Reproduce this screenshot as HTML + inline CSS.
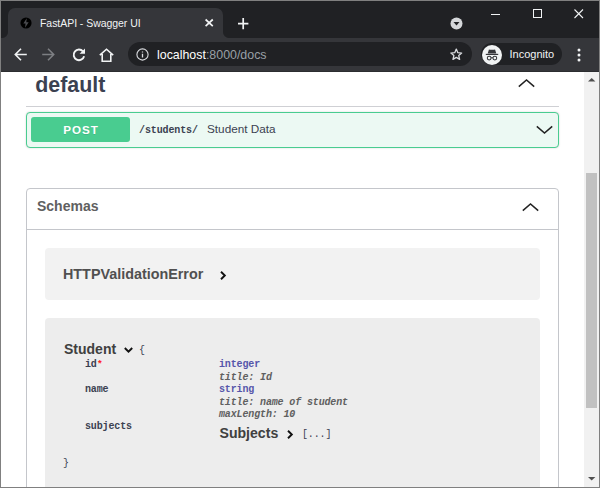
<!DOCTYPE html>
<html>
<head>
<meta charset="utf-8">
<title>FastAPI - Swagger UI</title>
<style>
html,body{margin:0;padding:0;}
body{width:600px;height:488px;overflow:hidden;background:#808080;font-family:"Liberation Sans",sans-serif;position:relative;}
.abs{position:absolute;}
#win{position:absolute;left:1px;top:1px;width:598px;height:486px;overflow:hidden;background:#fff;}
#tabstrip{position:absolute;left:0;top:0;width:598px;height:37px;background:#202124;}
#tab{position:absolute;left:7px;top:7px;width:215px;height:30px;background:#35363a;border-radius:7px 7px 0 0;}
#tab:before,#tab:after{content:"";position:absolute;bottom:0;width:6px;height:6px;}
#tab:before{left:-6px;background:radial-gradient(circle at 0 0,rgba(53,54,58,0) 5.5px,#35363a 6.5px);}
#tab:after{right:-6px;background:radial-gradient(circle at 100% 0,rgba(53,54,58,0) 5.5px,#35363a 6.5px);}
#tabtitle{position:absolute;left:32px;top:7.5px;font-size:10.5px;color:#f1f3f4;white-space:nowrap;line-height:14px;letter-spacing:-0.05px;}
#toolbar{position:absolute;left:0;top:37px;width:598px;height:34px;background:#35363a;box-shadow:inset 0 -1px 0 #2c2d30;}
#omni{position:absolute;left:126.5px;top:4.3px;width:344px;height:24.2px;border-radius:12.1px;background:#202124;}
#url{position:absolute;left:29.5px;top:5.5px;font-size:12.4px;line-height:15px;color:#9aa0a6;white-space:nowrap;}
#url b{font-weight:normal;color:#fff;}
#incog{position:absolute;left:479.5px;top:4.7px;width:81.5px;height:22.6px;border-radius:11.3px;background:#202124;}
#incogtxt{position:absolute;left:29px;top:5px;font-size:11px;line-height:13px;color:#f1f3f4;}
#page{position:absolute;left:0;top:71px;width:583px;height:415px;background:#fff;overflow:hidden;}
#sb{position:absolute;left:583px;top:71px;width:15px;height:415px;background:#f1f1f1;}
#thumb{position:absolute;left:1.8px;top:100.8px;width:11.5px;height:235.5px;background:#c1c1c1;}
h3#tag{position:absolute;margin:0;left:34.2px;top:0.5px;font-size:21.4px;line-height:24px;font-weight:bold;color:#3b4151;}
#tagline{position:absolute;left:25px;top:34px;width:533px;height:1px;background:#cfd0d4;}
#op{position:absolute;left:25px;top:40px;width:531px;height:34px;border:1px solid #49cc90;border-radius:4px;background:#ecf9f3;box-shadow:0 0 2px rgba(0,0,0,.19);}
#post{position:absolute;left:4px;top:4px;width:99px;height:25px;border-radius:3px;background:#49cc90;color:#fff;font-weight:bold;font-size:11.6px;line-height:25px;text-align:center;text-shadow:0 1px 0 rgba(0,0,0,.1);letter-spacing:0.95px;text-indent:1px;}
#path{position:absolute;left:112px;top:11.2px;font-family:"Liberation Mono",monospace;font-weight:bold;letter-spacing:-0.12px;font-size:10px;line-height:14px;color:#3b4151;white-space:nowrap;}
#summ{position:absolute;left:180px;top:9px;font-size:11.75px;line-height:14px;color:#3b4151;white-space:nowrap;}
#models{position:absolute;left:25px;top:116px;width:531px;height:400px;border:1px solid #c4c6cb;border-radius:4px;}
#mhead{position:absolute;left:0;top:0;width:531px;height:40px;border-bottom:1px solid #c4c6cb;}
#mtitle{position:absolute;left:10px;top:9px;font-size:14px;line-height:16px;font-weight:bold;color:#606060;}
.mbox{position:absolute;left:18px;width:495px;border-radius:4px;}
#m1{top:59px;height:52px;background:#f2f2f2;}
#m2{top:129px;height:300px;background:#ededed;}
.mname{position:absolute;font-size:14.25px;line-height:16px;font-weight:bold;color:#404040;white-space:nowrap;}
.mono{font-family:"Liberation Mono",monospace;font-size:10px;letter-spacing:-0.14px;line-height:12px;color:#3b4151;white-space:nowrap;position:absolute;font-weight:bold;}
.prim{color:#55a;}
.it{font-style:italic;color:#606060;}
svg{position:absolute;overflow:visible;}
</style>
</head>
<body>
<div id="win">
  <div id="tabstrip">
    <div id="tab">
      <svg style="left:12.4px;top:8.8px" width="12" height="12" viewBox="0 0 14 14"><circle cx="7" cy="7" r="6.5" fill="#000"/><path d="M7.9 1.6 L3.9 7.7 H6.5 L5.9 12.4 L10.1 6.1 H7.3 Z" fill="#4b4c50"/></svg>
      <div id="tabtitle">FastAPI - Swagger UI</div>
      <svg style="left:197px;top:11.2px" width="8.4" height="7.6" viewBox="0 0 8.4 7.6"><path d="M0.6 0.5 L7.8 7.1 M7.8 0.5 L0.6 7.1" stroke="#f1f3f4" stroke-width="1.7" fill="none"/></svg>
    </div>
    <svg style="left:237px;top:16.9px" width="10.4" height="11.2" viewBox="0 0 10.4 11.2"><path d="M5.2 0 V11.2 M0 5.6 H10.4" stroke="#f1f3f4" stroke-width="1.7" fill="none"/></svg>
    <svg style="left:449px;top:16px" width="13" height="13" viewBox="0 0 13 13"><circle cx="6.5" cy="6.5" r="6" fill="#d5d7da"/><path d="M3.5 5 H9.5 L6.5 8.5 Z" fill="#202124"/></svg>
    <svg style="left:490px;top:8px" width="10" height="10" viewBox="0 0 10 10"><path d="M0 5.5 H9" stroke="#f1f3f4" stroke-width="1" fill="none"/></svg>
    <svg style="left:532px;top:8px" width="10" height="10" viewBox="0 0 10 10"><rect x="0.5" y="0.5" width="8" height="8" stroke="#f1f3f4" stroke-width="1" fill="none"/></svg>
    <svg style="left:573px;top:8px" width="10" height="10" viewBox="0 0 10 10"><path d="M0.5 0.5 L9 9 M9 0.5 L0.5 9" stroke="#f1f3f4" stroke-width="1.1" fill="none"/></svg>
  </div>
  <div id="toolbar">
    <svg style="left:13px;top:10.2px" width="13" height="13" viewBox="0 0 13 13"><path d="M12.8 6.5 H1.6 M7 0.8 L1.3 6.5 L7 12.2" stroke="#f1f3f4" stroke-width="1.6" fill="none"/></svg>
    <svg style="left:41.4px;top:10.2px" width="13" height="13" viewBox="0 0 13 13"><path d="M0.2 6.5 H11.4 M6 0.8 L11.7 6.5 L6 12.2" stroke="#7d7f83" stroke-width="1.6" fill="none"/></svg>
    <svg style="left:70.6px;top:10.2px" width="14" height="13" viewBox="0 0 14 13"><path d="M11 3.4 A5.3 5.3 0 1 0 12.1 8.2" stroke="#f1f3f4" stroke-width="1.9" fill="none"/><path d="M13 0.4 V5.8 H7.6 Z" fill="#f1f3f4"/></svg>
    <svg style="left:98.4px;top:9.8px" width="15" height="14" viewBox="0 0 15 14"><path d="M0.8 7.2 L7.5 1.2 L14.2 7.2 M3.2 6 V13.2 H11.8 V6" stroke="#f1f3f4" stroke-width="1.6" fill="none" stroke-linejoin="miter"/></svg>
    <div id="omni">
      <svg style="left:8.6px;top:5.9px" width="13" height="13" viewBox="0 0 13 13"><circle cx="6.5" cy="6.5" r="5.6" stroke="#dadce0" stroke-width="1.1" fill="none"/><path d="M6.5 5.8 V9.6 M6.5 3.4 V4.6" stroke="#dadce0" stroke-width="1.3" fill="none"/></svg>
      <div id="url"><b>localhost</b>:8000/docs</div>
      <svg style="left:322px;top:6.2px" width="12.6" height="12.6" viewBox="0 0 14 14"><path d="M7 1.2 L8.7 5.2 L13 5.6 L9.7 8.4 L10.7 12.6 L7 10.4 L3.3 12.6 L4.3 8.4 L1 5.6 L5.3 5.2 Z" stroke="#dadce0" stroke-width="1.45" fill="none" stroke-linejoin="round"/></svg>
    </div>
    <div id="incog">
      <svg style="left:1.2px;top:1.9px" width="20" height="20" viewBox="0 0 19 19"><circle cx="9.5" cy="9.5" r="9.5" fill="#f1f3f4"/><path d="M6.6 4.2 L7.6 4.6 H11.4 L12.4 4.2 L13.6 8 H5.4 Z" fill="#35363a"/><rect x="3.6" y="8.4" width="11.8" height="1.1" fill="#35363a"/><circle cx="6.8" cy="12.4" r="1.8" stroke="#35363a" stroke-width="1" fill="none"/><circle cx="12.2" cy="12.4" r="1.8" stroke="#35363a" stroke-width="1" fill="none"/><path d="M8.6 12.2 H10.4" stroke="#35363a" stroke-width="1"/></svg>
      <div id="incogtxt">Incognito</div>
    </div>
    <svg style="left:576.2px;top:10.3px" width="4" height="14" viewBox="0 0 4 14"><circle cx="2" cy="2" r="1.5" fill="#f1f3f4"/><circle cx="2" cy="7" r="1.5" fill="#f1f3f4"/><circle cx="2" cy="12" r="1.5" fill="#f1f3f4"/></svg>
  </div>
  <div id="page">
    <h3 id="tag">default</h3>
    <svg style="left:516.8px;top:6px" width="17" height="10" viewBox="0 0 17 10"><path d="M0.8 8.6 L8.5 1.9 L16.2 8.6" stroke="#222" stroke-width="1.5" fill="none"/></svg>
    <div id="tagline"></div>
    <div id="op">
      <div id="post">POST</div>
      <div id="path">/students/</div>
      <div id="summ">Student Data</div>
      <svg style="left:508.8px;top:12px" width="17" height="10" viewBox="0 0 17 10"><path d="M0.8 1.4 L8.5 8.1 L16.2 1.4" stroke="#222" stroke-width="1.5" fill="none"/></svg>
    </div>
    <div id="models">
      <div id="mhead">
        <div id="mtitle">Schemas</div>
        <svg style="left:495.3px;top:13px" width="17" height="10" viewBox="0 0 17 10"><path d="M0.8 8.6 L8.5 1.9 L16.2 8.6" stroke="#222" stroke-width="1.5" fill="none"/></svg>
      </div>
      <div class="mbox" id="m1">
        <div class="mname" style="left:18px;top:18px;font-size:14.35px;color:#505050">HTTPValidationError</div>
        <svg style="left:175px;top:23px" width="6" height="9" viewBox="0 0 6 9"><path d="M1 0.8 L4.8 4.5 L1 8.2" stroke="#111" stroke-width="1.9" fill="none"/></svg>
      </div>
      <div class="mbox" id="m2">
        <div class="mname" style="left:19px;top:22.6px;font-size:14px">Student</div>
        <svg style="left:79px;top:29px" width="9" height="6" viewBox="0 0 9 6"><path d="M0.8 1 L4.5 4.7 L8.2 1" stroke="#111" stroke-width="1.9" fill="none"/></svg>
        <div class="mono" style="left:94px;top:27px;font-weight:normal">{</div>
        <div class="mono" style="left:40px;top:40.5px">id<span style="color:#f22;font-size:9.5px;position:relative;top:0.5px;left:0.2px">*</span></div>
        <div class="mono prim" style="left:174px;top:41.2px">integer</div>
        <div class="mono it" style="left:174px;top:53.8px">title: Id</div>
        <div class="mono" style="left:40px;top:65.5px">name</div>
        <div class="mono prim" style="left:174px;top:65.8px">string</div>
        <div class="mono it" style="left:174px;top:78.8px">title: name of student</div>
        <div class="mono it" style="left:174px;top:90.8px">maxLength: 10</div>
        <div class="mono" style="left:40px;top:102.8px">subjects</div>
        <div class="mname" style="left:174.5px;top:106.8px;font-size:14.1px">Subjects</div>
        <svg style="left:242px;top:112px" width="6" height="9" viewBox="0 0 6 9"><path d="M1 0.8 L4.8 4.5 L1 8.2" stroke="#111" stroke-width="1.9" fill="none"/></svg>
        <div class="mono" style="left:257px;top:111px;font-weight:normal">[...]</div>
        <div class="mono" style="left:18px;top:140.4px;font-weight:normal">}</div>
      </div>
    </div>
  </div>
  <div id="sb">
    <div id="thumb"></div>
    <svg style="left:4px;top:6px" width="7.4" height="3.6" viewBox="0 0 7 4" preserveAspectRatio="none"><path d="M0 4 L3.5 0 L7 4 Z" fill="#505050"/></svg>
    <svg style="left:4px;top:405px" width="7.4" height="3.6" viewBox="0 0 7 4" preserveAspectRatio="none"><path d="M0 0 L3.5 4 L7 0 Z" fill="#505050"/></svg>
  </div>
</div>
</body>
</html>
